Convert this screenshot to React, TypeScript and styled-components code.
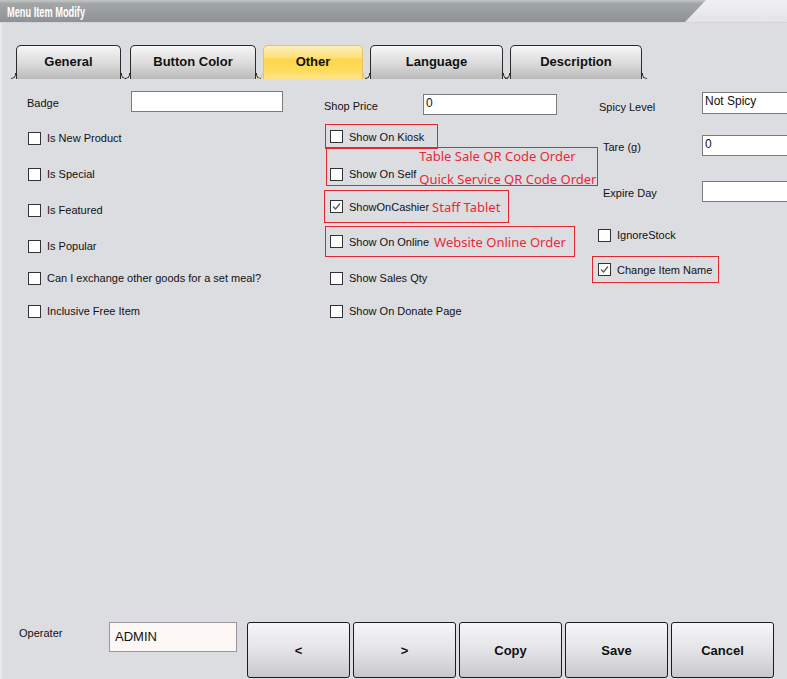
import React from 'react';
import styled, { createGlobalStyle, css } from 'styled-components';

const GlobalStyle = createGlobalStyle`
  html, body {
    margin: 0;
    padding: 0;
    height: 100%;
    overflow: hidden;
  }
  body {
    font-family: "Liberation Sans", Arial, sans-serif;
    font-size: 11px;
    color: #111;
    background: #dcdde1;
  }
`;

const Window = styled.div`
  display: flex;
  flex-direction: column;
  width: 787px;
  height: 679px;
  overflow: hidden;
  background: #dcdde1;
`;

const TitleBar = styled.div`
  display: flex;
  height: 22px;
  background: linear-gradient(#f0f0f3, #e4e4e8);
  border-bottom: 1px solid #d6d2de;
`;

const TitleStrip = styled.div`
  width: 706px;
  display: flex;
  align-items: center;
  padding-left: 7px;
  box-sizing: border-box;
  background: linear-gradient(#c0c6c2 0px, #b4b9b8 2px, #a3a7a8 3px, #8d9294 100%);
  clip-path: polygon(0 0, 100% 0, calc(100% - 21px) 100%, 0 100%);
`;

const TitleText = styled.span`
  display: inline-block;
  color: #fff;
  font-family: "Liberation Sans", Arial, sans-serif;
  font-weight: bold;
  font-size: 14px;
  line-height: 16px;
  transform: scaleX(0.66);
  transform-origin: left center;
  white-space: nowrap;
  margin-top: 1px;
`;

const Body = styled.div`
  flex: 1;
  display: flex;
  flex-direction: column;
  border-left: 2px solid #e9e9ee;
`;

const TabBar = styled.div`
  display: flex;
  gap: 7px;
  padding: 22px 0 0 14px;
  height: 34px;
`;

const Tab = styled.div<{ $w: number; $mr?: number; $active?: boolean }>`
  position: relative;
  width: ${(p) => p.$w}px;
  margin-right: ${(p) => p.$mr || 0}px;
  height: 34px;
  box-sizing: border-box;
  display: flex;
  align-items: center;
  justify-content: center;
  padding-bottom: 2px;
  font-size: 13px;
  font-weight: bold;
  color: #111;
  border: 1px solid #2a2a2a;
  border-bottom: none;
  border-radius: 5px 5px 0 0;
  background: linear-gradient(#f6f6f6, #dadada 55%, #b9b9b9);
  --edge: #2a2a2a;
  ${(p) =>
    p.$active &&
    css`
      border-color: #e6c56a;
      --edge: #e6c56a;
      background: linear-gradient(#fdf0b8 0%, #fde07c 35%, #fdd64a 40%, #fddc5e 75%, #fde48c 100%);
    `}

  &::before,
  &::after {
    content: '';
    position: absolute;
    bottom: 0;
    width: 4px;
    height: 5px;
  }
  &::before {
    left: -6px;
    border-right: 1px solid var(--edge);
    border-bottom: 1px solid var(--edge);
    border-bottom-right-radius: 5px;
  }
  &::after {
    right: -6px;
    border-left: 1px solid var(--edge);
    border-bottom: 1px solid var(--edge);
    border-bottom-left-radius: 5px;
  }
`;

const Form = styled.div`
  flex: 1;
  display: grid;
  grid-template-columns: 297px 268px 1fr;
  padding: 11px 0 0 25px;
  align-items: start;
`;

const Col = styled.div`
  display: flex;
  flex-direction: column;
`;

const FieldRow = styled.div<{ $mt: number; $h: number }>`
  display: flex;
  align-items: flex-start;
  margin-top: ${(p) => p.$mt}px;
  height: ${(p) => p.$h}px;
`;

const Label = styled.span<{ $w: number; $mt: number; $ml?: number }>`
  width: ${(p) => p.$w}px;
  margin-left: ${(p) => p.$ml || 0}px;
  margin-top: ${(p) => p.$mt}px;
  line-height: 14px;
  font-size: 11px;
  flex-shrink: 0;
`;

const TextBox = styled.div<{ $w: number; $h: number }>`
  width: ${(p) => p.$w}px;
  height: ${(p) => p.$h}px;
  box-sizing: border-box;
  flex-shrink: 0;
  background: #fff;
  border: 1px solid #7b7b7b;
  padding: 1px 0 0 2px;
  font-size: 12px;
  line-height: 15px;
`;

const CheckRow = styled.div<{ $mt?: number; $h?: number; $pl?: number }>`
  display: flex;
  align-items: center;
  margin-top: ${(p) => p.$mt || 0}px;
  height: ${(p) => p.$h || 20}px;
  padding-left: ${(p) => p.$pl || 0}px;
  gap: 6px;
  font-size: 11px;
  white-space: nowrap;
`;

const Marked = styled.div<{ $mt: number; $ml: number; $w: number; $h: number; $pl: number; $low?: boolean }>`
  display: flex;
  align-items: ${(p) => (p.$low ? 'flex-start' : 'center')};
  box-sizing: border-box;
  margin-top: ${(p) => p.$mt}px;
  margin-left: ${(p) => p.$ml}px;
  width: ${(p) => p.$w}px;
  height: ${(p) => p.$h}px;
  padding-left: ${(p) => p.$pl}px;
  border: 1px solid #e0262e;
  gap: 6px;
  font-size: 11px;
  white-space: nowrap;
`;

const Box = styled.span`
  width: 13px;
  height: 13px;
  box-sizing: border-box;
  border: 1px solid #333;
  background: #fff;
  flex-shrink: 0;
  display: flex;
  align-items: center;
  justify-content: center;
`;

const Note = styled.span<{ $ml: number }>`
  margin-left: ${(p) => p.$ml}px;
  font-family: "Noto Sans", sans-serif;
  font-size: 13px;
  color: #e8283a;
  line-height: 16px;
`;

const NoteStack = styled.div`
  display: flex;
  flex-direction: column;
  gap: 7px;
  margin-left: -3px;
  padding-top: 0;
  font-family: "Noto Sans", sans-serif;
  font-size: 13px;
  color: #e8283a;
  line-height: 16px;
`;

const Footer = styled.div`
  display: flex;
  align-items: flex-start;
  padding: 0 0 2px 17px;
  height: 55px;
`;

const OperLabel = styled.span`
  width: 90px;
  margin-top: 4px;
  font-size: 11px;
  line-height: 14px;
`;

const OperBox = styled.div`
  width: 128px;
  height: 30px;
  box-sizing: border-box;
  border: 1px solid #9a949e;
  background: #fdf8f5;
  padding: 6px 0 0 5px;
  font-size: 13px;
  line-height: 16px;
  margin-right: 10px;
`;

const Buttons = styled.div`
  display: flex;
  gap: 3px;
`;

const Btn = styled.div`
  width: 103px;
  height: 56px;
  box-sizing: border-box;
  border: 1px solid #1c1c1c;
  border-radius: 3px;
  background: linear-gradient(#f6f6f8, #e4e4e8 50%, #c8c8cc);
  display: flex;
  align-items: center;
  justify-content: center;
  font-size: 13px;
  font-weight: bold;
`;

const Check = ({ on }: { on?: boolean }) => (
  <Box>
    {on && (
      <svg width="11" height="11" viewBox="0 0 11 11">
        <polyline points="2,5.5 4.5,8 9,2.5" fill="none" stroke="#5a5a5a" strokeWidth="1.3" />
      </svg>
    )}
  </Box>
);

const tabs = [
  { name: 'General', w: 105, mr: 2 },
  { name: 'Button Color', w: 126 },
  { name: 'Other', w: 100, active: true },
  { name: 'Language', w: 133 },
  { name: 'Description', w: 132 },
];

const leftChecks = [
  { t: 'Is New Product', mt: 17 },
  { t: 'Is Special', mt: 16 },
  { t: 'Is Featured', mt: 16 },
  { t: 'Is Popular', mt: 16 },
  { t: 'Can I exchange other goods for a set meal?', mt: 12 },
  { t: 'Inclusive Free Item', mt: 13 },
];

const App = () => {
  return (
    <Window>
      <GlobalStyle />
      <TitleBar>
        <TitleStrip>
          <TitleText>Menu Item Modify</TitleText>
        </TitleStrip>
      </TitleBar>
      <Body>
        <TabBar>
          {tabs.map((t) => (
            <Tab key={t.name} $w={t.w} $mr={t.mr} $active={t.active}>
              {t.name}
            </Tab>
          ))}
        </TabBar>
        <Form>
          <Col>
            <FieldRow $mt={1} $h={20}>
              <Label $w={104} $mt={5}>Badge</Label>
              <TextBox $w={152} $h={21} />
            </FieldRow>
            {leftChecks.map((c) => (
              <CheckRow key={c.t} $mt={c.mt} $pl={1}>
                <Check />
                {c.t}
              </CheckRow>
            ))}
          </Col>
          <Col>
            <FieldRow $mt={4} $h={21}>
              <Label $w={99} $mt={5}>Shop Price</Label>
              <TextBox $w={134} $h={21}>0</TextBox>
            </FieldRow>
            <Marked $mt={9} $ml={1} $w={113} $h={25} $pl={4}>
              <Check />
              Show On Kiosk
            </Marked>
            <Marked $mt={-2} $ml={2} $w={272} $h={39} $pl={3} $low>
              <CheckRow $mt={16}>
                <Check />
                Show On Self
              </CheckRow>
              <NoteStack>
                <span>Table Sale QR Code Order</span>
                <span>Quick Service QR Code Order</span>
              </NoteStack>
            </Marked>
            <Marked $mt={4} $ml={0} $w={185} $h={33} $pl={5}>
              <Check on />
              ShowOnCashier
              <Note $ml={-3}>Staff Tablet</Note>
            </Marked>
            <Marked $mt={3} $ml={1} $w={250} $h={31} $pl={4}>
              <Check />
              Show On Online
              <Note $ml={-1}>Website Online Order</Note>
            </Marked>
            <CheckRow $mt={11} $pl={6}>
              <Check />
              Show Sales Qty
            </CheckRow>
            <CheckRow $mt={13} $pl={6}>
              <Check />
              Show On Donate Page
            </CheckRow>
          </Col>
          <Col>
            <FieldRow $mt={2} $h={22}>
              <Label $w={103} $mt={8} $ml={7}>Spicy Level</Label>
              <TextBox $w={100} $h={22}>Not Spicy</TextBox>
            </FieldRow>
            <FieldRow $mt={21} $h={21}>
              <Label $w={99} $mt={5} $ml={11}>Tare (g)</Label>
              <TextBox $w={100} $h={21}>0</TextBox>
            </FieldRow>
            <FieldRow $mt={25} $h={21}>
              <Label $w={99} $mt={5} $ml={11}>Expire Day</Label>
              <TextBox $w={100} $h={21} />
            </FieldRow>
            <CheckRow $mt={23} $pl={6}>
              <Check />
              IgnoreStock
            </CheckRow>
            <Marked $mt={11} $ml={0} $w={127} $h={27} $pl={5}>
              <Check on />
              Change Item Name
            </Marked>
          </Col>
        </Form>
        <Footer>
          <OperLabel>Operater</OperLabel>
          <OperBox>ADMIN</OperBox>
          <Buttons>
            <Btn>&lt;</Btn>
            <Btn>&gt;</Btn>
            <Btn>Copy</Btn>
            <Btn>Save</Btn>
            <Btn>Cancel</Btn>
          </Buttons>
        </Footer>
      </Body>
    </Window>
  );
};

export default App;
